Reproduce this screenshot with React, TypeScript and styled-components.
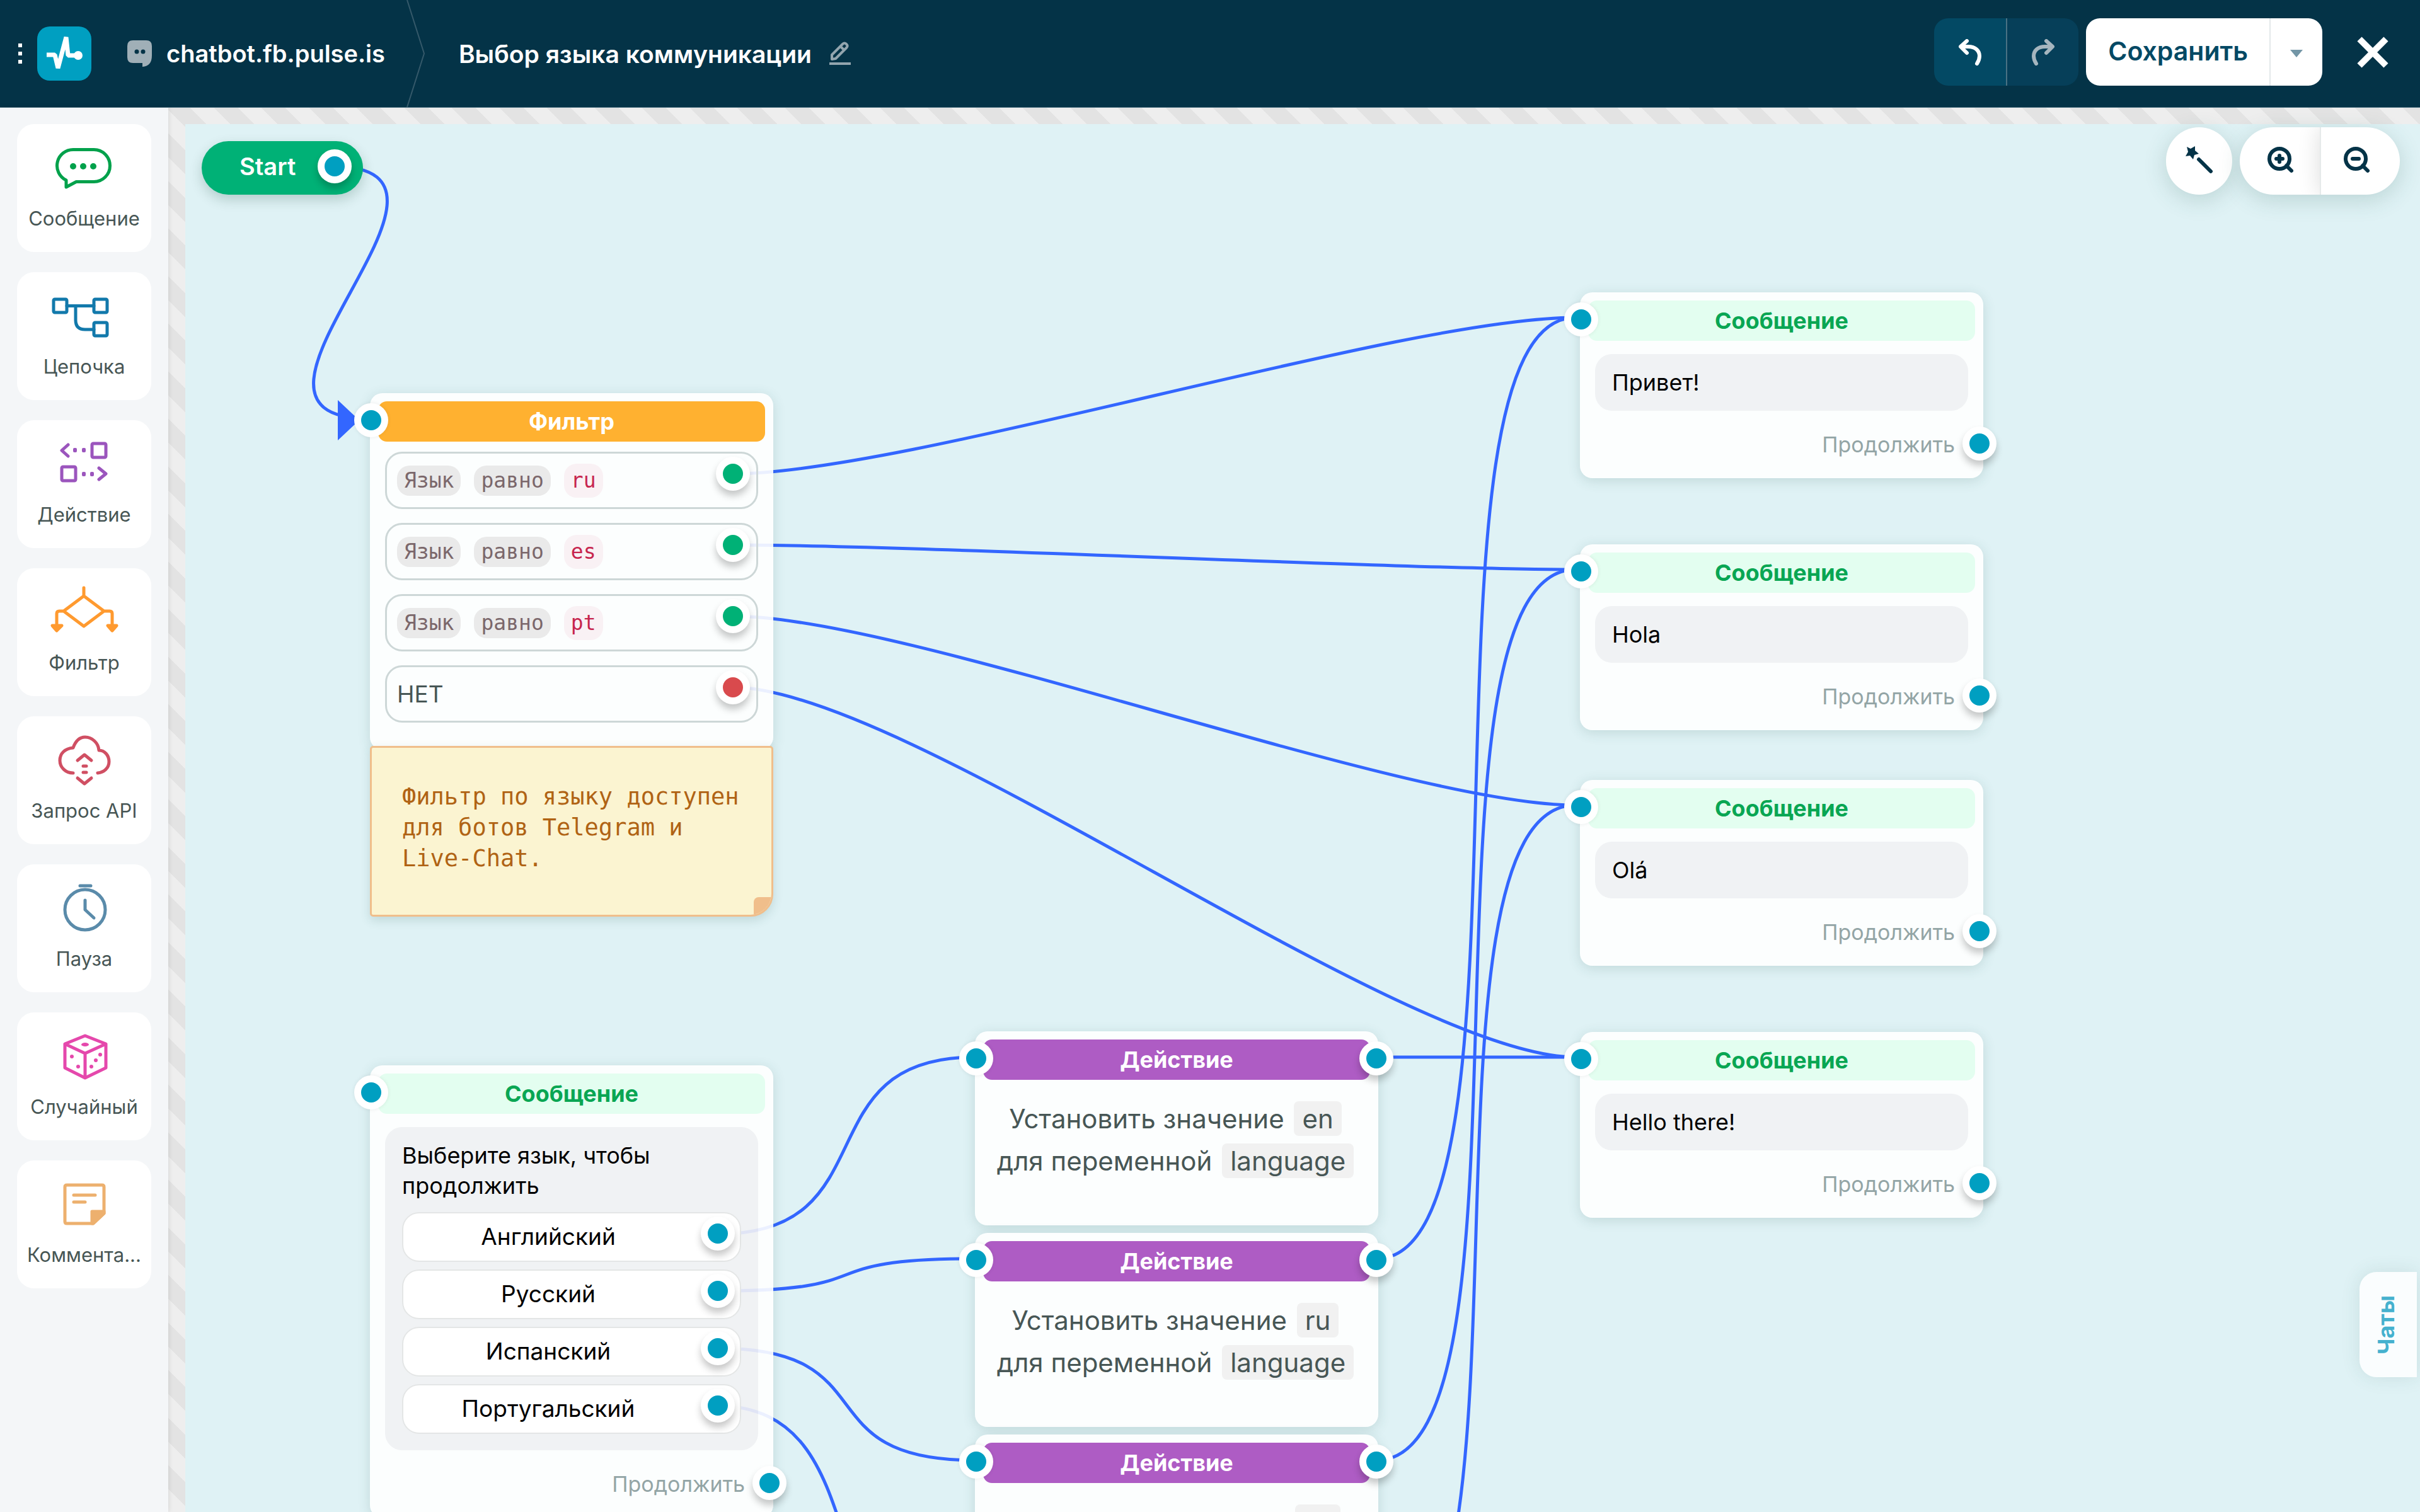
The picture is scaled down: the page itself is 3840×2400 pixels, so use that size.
import React from "react";
import styled, { createGlobalStyle, css } from "styled-components";

// Types
type Point = { x: number; y: number };

type PaletteItem = {
  title: string;
  color: string;
  icon: React.ReactNode;
};

type MessageData = Point & { text: string };
type ActionData = Point & { value: string };

// Theme values
const sans = `Inter, "Liberation Sans", sans-serif`;
const mono = `"DejaVu Sans Mono", "Liberation Mono", monospace`;

const colors = {
  navy: "#043347",
  teal: "#009fc1",
  green: "#00b176",
  red: "#d94a4d",
  edge: "#3366ff",
  text: "#475655",
};

// Data
const paletteItems: PaletteItem[] = [
  {
    title: "Сообщение",
    color: "#00a14b",
    icon: (
      <>
        <path d="M42 14.5H75a25.5 25.5 0 0 1 0 51H47L31 74V63A25.5 25.5 0 0 1 42 14.5z" />
        <g fill="currentColor" stroke="none">
          <circle cx="42" cy="41" r="5" />
          <circle cx="58" cy="41" r="5" />
          <circle cx="74" cy="41" r="5" />
        </g>
      </>
    ),
  },
  {
    title: "Цепочка",
    color: "#1279ab",
    icon: (
      <>
        <rect x="11" y="17" width="21" height="21" rx="2" />
        <rect x="75" y="17" width="21" height="21" rx="2" />
        <rect x="75" y="54" width="21" height="21" rx="2" />
        <path d="M32 27.5H75M46 27.5V50q0 15 15 15H75" />
      </>
    ),
  },
  {
    title: "Действие",
    color: "#9b55bd",
    icon: (
      <>
        <rect x="72" y="11" width="22" height="22" rx="2" />
        <rect x="24" y="48" width="22" height="22" rx="2" />
        <path d="M34 13 24 22 34 31M83 50 94 59 83 68" />
        <g fill="currentColor" stroke="none">
          <rect x="42" y="18" width="6" height="7" rx="2" />
          <rect x="56" y="18" width="6" height="7" rx="2" />
          <rect x="56" y="56" width="6" height="7" rx="2" />
          <rect x="69" y="56" width="6" height="7" rx="2" />
        </g>
      </>
    ),
  },
  {
    title: "Фильтр",
    color: "#ff9a2f",
    icon: (
      <>
        <path d="M59 5V17M59 18 27 42 59 66 91 42zM27 42H20q-4 0-4 4V64M91 42H100q4 0 4 4V64" />
        <path d="M9 65H24L16 73zM97 65H111L104 73z" fill="currentColor" />
      </>
    ),
  },
  {
    title: "Запрос API",
    color: "#d04f63",
    icon: (
      <>
        <path d="M42 64C30 64 21 55 21 44 21 33 29 25 42 24 46 13 53 7 61 7 72 7 82 16 83 28 92 28 99 36 99 46 99 56 91 63 81 64" />
        <path d="M49 44 60 35 71 44M58 53H63M58 63H63M49 72 60 81 71 72" />
      </>
    ),
  },
  {
    title: "Пауза",
    color: "#5a8baa",
    icon: (
      <>
        <circle cx="61" cy="46" r="32" />
        <path d="M53 8H70M61 31V46L75 59" />
      </>
    ),
  },
  {
    title: "Случайный",
    color: "#e548ac",
    icon: (
      <>
        <path d="M61 11 94 24V62L61 78 29 62V24zM29 24 61 39 94 24M61 39V78" />
        <g fill="currentColor" stroke="none">
          <ellipse cx="61" cy="25" rx="6" ry="3" />
          <circle cx="40" cy="44" r="3" />
          <circle cx="50" cy="60" r="3" />
          <circle cx="71" cy="60" r="3" />
          <circle cx="78" cy="50" r="3" />
          <circle cx="85" cy="41" r="3" />
        </g>
      </>
    ),
  },
  {
    title: "Коммента...",
    color: "#edb06e",
    icon: (
      <>
        <path d="M32 13H88q3 0 3 3V58L74 74H32q-3 0-3-3V16q0-3 3-3z" />
        <path d="M43 29H77M43 40H61" />
        <path d="M72 55H91V58L74 74H72z" fill="currentColor" />
      </>
    ),
  },
];

const conditions = ["ru", "es", "pt"];

const replies = ["Английский", "Русский", "Испанский", "Португальский"];

const messages: MessageData[] = [
  { x: 2213, y: 267, text: "Привет!" },
  { x: 2213, y: 667, text: "Hola" },
  { x: 2213, y: 1041, text: "Olá" },
  { x: 2213, y: 1441, text: "Hello there!" },
];

const actions: ActionData[] = [
  { x: 1253, y: 1440, value: "en" },
  { x: 1253, y: 1760, value: "ru" },
  { x: 1253, y: 2080, value: "es" },
];

const edges: [Point, Point][] = [
  [{ x: 234, y: 67 }, { x: 290, y: 467 }],
  [{ x: 869, y: 555 }, { x: 2206, y: 307 }],
  [{ x: 869, y: 668 }, { x: 2206, y: 707 }],
  [{ x: 869, y: 781 }, { x: 2206, y: 1081 }],
  [{ x: 869, y: 894 }, { x: 2206, y: 1481 }],
  [{ x: 844, y: 1762 }, { x: 1253, y: 1481 }],
  [{ x: 844, y: 1852 }, { x: 1253, y: 1801 }],
  [{ x: 844, y: 1943 }, { x: 1253, y: 2121 }],
  [{ x: 840, y: 2034 }, { x: 1249, y: 2441 }],
  [{ x: 1890, y: 1481 }, { x: 2206, y: 1481 }],
  [{ x: 1890, y: 1801 }, { x: 2206, y: 307 }],
  [{ x: 1890, y: 2121 }, { x: 2206, y: 707 }],
  [{ x: 1890, y: 2441 }, { x: 2206, y: 1081 }],
];

const CURVE = 275;

const edgePath = ([from, to]: [Point, Point]) =>
  `M${from.x} ${from.y}C${from.x + CURVE} ${from.y} ${to.x - CURVE} ${to.y} ${to.x} ${to.y}`;

// Styled Components
const GlobalStyle = createGlobalStyle`
  * {
    box-sizing: border-box;
  }

  body {
    margin: 0;
    font-family: ${sans};
    background: #f4f6f8;
    overflow: hidden;
  }

  button {
    font: inherit;
    color: inherit;
    margin: 0;
    padding: 0;
    border: none;
    background: none;
    cursor: pointer;
  }
`;

const Page = styled.div`
  display: flex;
  flex-direction: column;
  height: 100vh;
`;

const Header = styled.header`
  display: flex;
  align-items: stretch;
  flex: none;
  height: 171px;
  padding-right: 50px;
  color: white;
  background: ${colors.navy};
  border-bottom: 1px solid #4d7282;
`;

const Brand = styled.div`
  display: flex;
  align-items: center;
  padding-left: 29px;
`;

const DragDots = styled.svg`
  width: 6px;
  height: 32px;
  margin-right: 24px;
`;

const Logo = styled.a`
  display: flex;
  width: 86px;
  height: 86px;
  border-radius: 20px;
  background: ${colors.teal};
`;

const BotLink = styled.a`
  display: flex;
  align-items: center;
  gap: 22px;
  margin-left: 57px;
  color: white;
  font-size: 38px;
  font-weight: 600;
  text-decoration: none;
`;

const Separator = styled.svg`
  width: 30px;
  height: 170px;
  margin-left: 34px;
`;

const FlowTitle = styled.h1`
  display: flex;
  align-items: center;
  gap: 27px;
  margin: 0 auto 0 53px;
  font-size: 39px;
  font-weight: 600;
`;

const IconButton = styled.button`
  display: flex;
`;

const HeaderActions = styled.div`
  display: flex;
  align-items: flex-start;
  gap: 12px;
  padding-top: 29px;
`;

const ButtonGroup = styled.div`
  display: flex;
  height: 107px;
  border-radius: 22px;
  overflow: hidden;
`;

const HistoryButton = styled.button<{ $dim?: boolean }>`
  display: flex;
  align-items: center;
  justify-content: center;
  width: 114px;
  color: ${({ $dim }) => ($dim ? "#a5b5be" : "#ffffff")};
  background: ${({ $dim }) => ($dim ? "#063f59" : "#034964")};

  & + & {
    width: 115px;
    border-left: 2px solid #4a7183;
  }
`;

const SaveButton = styled.button`
  padding: 0 34px 4px 35px;
  color: #034964;
  background: white;
  font-size: 41px;
  font-weight: 600;
`;

const SaveMenuButton = styled.button`
  display: flex;
  align-items: center;
  justify-content: center;
  width: 84px;
  padding-top: 4px;
  background: white;
  border-left: 2px solid #e3e8ea;
`;

const CloseButton = styled.button`
  display: flex;
  align-items: center;
  height: 107px;
  margin-left: 43px;
`;

const Body = styled.div`
  display: flex;
  flex: 1;
  min-height: 0;
`;

const Palette = styled.aside`
  position: relative;
  z-index: 2;
  display: flex;
  flex-direction: column;
  flex: none;
  gap: 32px;
  width: 267px;
  padding: 26px 27px;
  background: #f4f6f8;
  box-shadow: 0 0 8px rgba(0, 0, 0, 0.12);
`;

const PaletteCard = styled.button<{ $color: string }>`
  display: flex;
  flex-direction: column;
  align-items: center;
  height: 203px;
  padding-top: 26px;
  border-radius: 27px;
  background: white;

  svg {
    width: 120px;
    height: 90px;
    color: ${({ $color }) => $color};
    fill: none;
    stroke: currentColor;
    stroke-width: 5;
    stroke-linecap: round;
    stroke-linejoin: round;
  }
`;

const PaletteTitle = styled.span`
  margin-top: 14px;
  color: ${colors.text};
  font-size: 31px;
  line-height: 40px;
  white-space: nowrap;
`;

const Canvas = styled.main`
  position: relative;
  flex: 1;
  min-width: 0;
  padding: 26px 0 0 27px;
  overflow: hidden;
  background: repeating-linear-gradient(
      45deg,
      #e3e3e3 0 12.5%,
      #eeeeee 12.5% 25%
    ) -3px 0 / 151px 151px;
`;

const Board = styled.div`
  position: relative;
  height: 100%;
  background: #dff2f5;
`;

const Edges = styled.svg`
  position: absolute;
  inset: 0;
  width: 100%;
  height: 100%;
  fill: none;
  stroke: ${colors.edge};
  stroke-width: 5;
`;

// Where a connector dot sits on its parent
const portPlaces = {
  input: css`
    position: absolute;
    top: 16px;
    left: -25px;
  `,
  output: css`
    position: absolute;
    top: 16px;
    right: -24px;
  `,
  footer: css`
    position: absolute;
    top: 25px;
    right: -34px;
  `,
  row: css`
    position: absolute;
    top: 5px;
    right: 10px;
  `,
  reply: css`
    position: absolute;
    top: 5px;
    right: 8px;
  `,
};

const Port = styled.span<{ $place?: keyof typeof portPlaces; $color?: string }>`
  width: 54px;
  height: 54px;
  border: 11px solid white;
  border-radius: 50%;
  background: ${({ $color = colors.teal }) => $color};
  box-shadow: ${({ $place }) =>
    $place === "input"
      ? "0 0 6px rgba(0, 0, 0, 0.08)"
      : "0 8px 12px rgba(0, 0, 0, 0.22)"};
  ${({ $place }) => $place && portPlaces[$place]}
`;

const StartNode = styled.div`
  position: absolute;
  top: 27px;
  left: 26px;
  display: flex;
  align-items: center;
  gap: 35px;
  height: 85px;
  padding: 0 18px 6px 60px;
  border-radius: 43px;
  color: white;
  background: ${colors.green};
  box-shadow: 0 8px 20px rgba(0, 60, 40, 0.2);
  font-size: 38px;
  font-weight: 600;
`;

const NodeBox = styled.section<{ $x: number; $y: number }>`
  position: absolute;
  top: ${({ $y }) => $y}px;
  left: ${({ $x }) => $x}px;
  width: 640px;
`;

const Card = styled.div`
  display: flow-root;
  padding: 13px;
  border-radius: 20px;
  background: rgba(255, 255, 255, 0.9);
  box-shadow: 0 4px 20px rgba(40, 90, 80, 0.16);
`;

const headTones = {
  filter: css`
    color: white;
    background: #ffb130;
  `,
  message: css`
    color: #09a653;
    background: #e3fef0;
  `,
  action: css`
    color: white;
    background: #ae5cc4;
  `,
};

const CardHead = styled.h2<{ $tone: keyof typeof headTones }>`
  margin: 0;
  border-radius: 14px;
  font-size: 36px;
  font-weight: 700;
  line-height: 64px;
  text-align: center;
  ${({ $tone }) => headTones[$tone]}
`;

const Conditions = styled.div`
  display: flex;
  flex-direction: column;
  gap: 22px;
  padding: 16px 11px 30px;
`;

const Condition = styled.div`
  position: relative;
  display: flex;
  align-items: center;
  gap: 21px;
  height: 91px;
  padding: 0 16px;
  border: 3px solid #cdd7d7;
  border-radius: 27px;
  color: ${colors.text};
  font-size: 37px;
`;

const Tag = styled.span<{ $value?: boolean }>`
  padding: 0 11px;
  border-radius: 20px;
  color: ${({ $value }) => ($value ? "#c7254e" : "#7b676b")};
  background: ${({ $value }) => ($value ? "#f9f1f4" : "#eaeaea")};
  font-family: ${mono};
  font-size: 33px;
  line-height: ${({ $value }) => ($value ? 54 : 48)}px;
`;

const Note = styled.div`
  position: relative;
  min-height: 271px;
  margin-top: -6px;
  padding: 53px 24px 53px 48px;
  border: 3px solid #f0be8b;
  border-radius: 5px 5px 36px 5px;
  overflow: hidden;
  color: #b06314;
  background: #fbf4d1;
  box-shadow: 0 6px 16px rgba(40, 90, 80, 0.16);
  font-family: ${mono};
  font-size: 37px;
  line-height: 49px;

  &::after {
    content: "";
    position: absolute;
    right: 0;
    bottom: 0;
    width: 28px;
    height: 28px;
    border-top-left-radius: 8px;
    background: #f0be8b;
  }
`;

const Bubble = styled.div`
  margin: 21px 11px 0;
  padding: 21px 27px;
  border-radius: 27px;
  background: rgba(15, 15, 50, 0.05);
  color: black;
  font-size: 36px;
  line-height: 48px;
`;

const Replies = styled.div`
  display: flex;
  flex-direction: column;
  gap: 12px;
  margin: 18px 0 5px;
`;

const Reply = styled.button`
  position: relative;
  height: 79px;
  padding: 0 74px 2px 0;
  border: 2px solid #e4e6e6;
  border-radius: 27px;
  background: white;
  font-size: 37px;
`;

const CardFoot = styled.div`
  position: relative;
  height: 94px;
  padding: 30px 32px 0 0;
  color: #93a5a6;
  font-size: 34px;
  line-height: 48px;
  text-align: right;
`;

const ActionText = styled.p`
  height: 218px;
  margin: 0;
  padding: 28px 4px 0 0;
  color: ${colors.text};
  font-size: 42px;
  line-height: 67px;
  text-align: center;
  white-space: nowrap;
`;

const Value = styled.span`
  margin-left: 4px;
  padding: 2px 13px;
  border-radius: 8px;
  background: #f1f1f1;
`;

const Tools = styled.div`
  position: absolute;
  top: 5px;
  right: 32px;
  display: flex;
  gap: 12px;
`;

const ToolGroup = styled.div`
  display: flex;
  height: 107px;
  border-radius: 54px;
  overflow: hidden;
  background: white;
  box-shadow: 0 8px 36px rgba(40, 90, 80, 0.2);
`;

const ToolButton = styled.button<{ $wide?: boolean }>`
  display: flex;
  align-items: center;
  justify-content: center;
  width: ${({ $wide }) => ($wide ? 127 : 105)}px;
  padding-bottom: 6px;
  color: ${colors.navy};

  & + & {
    padding-right: 14px;
    border-left: 2px solid #e6eaea;
    box-shadow: 0 0 36px rgba(0, 0, 0, 0.14);
  }
`;

const ChatsTab = styled.button`
  position: absolute;
  right: 5px;
  bottom: 214px;
  width: 91px;
  height: 167px;
  padding-left: 8px;
  border-radius: 0 27px 27px 0;
  color: #45b1ce;
  background: rgba(255, 255, 255, 0.84);
  box-shadow: 0 0 30px rgba(40, 90, 80, 0.12);
  font-size: 36px;
  font-weight: 700;
  writing-mode: vertical-rl;
  transform: rotate(180deg);
`;

// Icons
const UndoIcon = () => (
  <svg width="36" height="42" viewBox="0 0 36 42" fill="none" stroke="currentColor" strokeWidth="6" strokeLinecap="round" strokeLinejoin="round">
    <path d="M13 3 3 12 13 22M4 12H15C27 12 33 19 33 27 33 32 31 36 29 39" />
  </svg>
);

const RedoIcon = () => (
  <svg width="36" height="42" viewBox="0 0 36 42" fill="none" stroke="currentColor" strokeWidth="6" strokeLinecap="round" strokeLinejoin="round">
    <path d="M23 3 33 12 23 22M32 12H21C9 12 3 19 3 27 3 32 5 36 7 39" />
  </svg>
);

const WandIcon = () => (
  <svg width="46" height="46" viewBox="0 0 46 46" fill="currentColor">
    <path d="M3 3 9 6 16 2 16 9 22 14 15 16 13 23 8 17 1 18 5 11z" />
    <path d="M22 23 41 42" stroke="currentColor" strokeWidth="6" strokeLinecap="round" />
  </svg>
);

const ZoomIcon = ({ plus }: { plus?: boolean }) => (
  <svg width="42" height="42" viewBox="0 0 42 42" fill="none" stroke="currentColor" strokeWidth="6" strokeLinecap="round">
    <circle cx="20" cy="20" r="16" />
    <path d={plus ? "M31 31 39 39M15 20H25M20 15V25" : "M31 31 39 39M15 20H25"} />
  </svg>
);

// Parts
const MessageNode = ({ x, y, children }: Point & { children: React.ReactNode }) => (
  <NodeBox $x={x} $y={y}>
    <Card>
      <CardHead $tone="message">Сообщение</CardHead>
      <Bubble>{children}</Bubble>
      <CardFoot>
        Продолжить
        <Port $place="footer" />
      </CardFoot>
    </Card>
    <Port $place="input" />
  </NodeBox>
);

const ActionNode = ({ x, y, value }: ActionData) => (
  <NodeBox $x={x} $y={y}>
    <Card>
      <CardHead $tone="action">Действие</CardHead>
      <ActionText>
        Установить значение <Value>{value}</Value>
        <br />
        для переменной <Value>language</Value>
      </ActionText>
    </Card>
    <Port $place="input" />
    <Port $place="output" />
  </NodeBox>
);

const TopBar = () => (
  <Header>
    <Brand>
      <DragDots viewBox="0 0 6 32" fill="white">
        <rect width="6" height="6" />
        <rect y="13" width="6" height="6" />
        <rect y="26" width="6" height="6" />
      </DragDots>
      <Logo href="#" aria-label="SendPulse">
        <svg width="86" height="86" viewBox="0 0 86 86" fill="none" stroke="white" strokeWidth="7" strokeLinejoin="bevel">
          <path d="M15 45H28L33 66 46 17 49 46H65" />
          <circle cx="65" cy="46" r="7" fill="white" stroke="none" />
        </svg>
      </Logo>
      <BotLink href="#">
        <svg width="40" height="42" viewBox="0 0 40 42">
          <path d="M9 0H30q9 0 9 9V24q0 17-15 18V36H9q-9 0-9-9V9q0-9 9-9z" fill="#a0afb7" />
          <circle cx="15" cy="18" r="3.5" fill={colors.navy} />
          <circle cx="25" cy="18" r="3.5" fill={colors.navy} />
        </svg>
        chatbot.fb.pulse.is
      </BotLink>
      <Separator viewBox="0 0 30 170" fill="none" stroke="#35596a" strokeWidth="2">
        <path d="M1 0 28 85 1 170" />
      </Separator>
    </Brand>
    <FlowTitle>
      Выбор языка коммуникации
      <IconButton aria-label="Переименовать">
        <svg width="36" height="38" viewBox="0 0 36 38" fill="none" stroke="#93a5ae" strokeWidth="4" strokeLinejoin="round">
          <path d="M5 28V21L22 4Q25 1 28 4 31 7 28 10L11 27zM19 8 25 14" />
          <path d="M1 35H35" />
        </svg>
      </IconButton>
    </FlowTitle>
    <HeaderActions>
      <ButtonGroup>
        <HistoryButton aria-label="Отменить">
          <UndoIcon />
        </HistoryButton>
        <HistoryButton $dim aria-label="Повторить">
          <RedoIcon />
        </HistoryButton>
      </ButtonGroup>
      <ButtonGroup>
        <SaveButton>Сохранить</SaveButton>
        <SaveMenuButton aria-label="Другие варианты сохранения">
          <svg width="20" height="12" viewBox="0 0 20 12" fill="#7396a6">
            <path d="M0 0H20L10 12z" />
          </svg>
        </SaveMenuButton>
      </ButtonGroup>
      <CloseButton aria-label="Закрыть">
        <svg width="50" height="50" viewBox="0 0 50 50" stroke="white" strokeWidth="10">
          <path d="M4 4 46 46M46 4 4 46" />
        </svg>
      </CloseButton>
    </HeaderActions>
  </Header>
);

const App: React.FC = () => {
  return (
    <Page>
      <GlobalStyle />
      <TopBar />
      <Body>
        <Palette>
          {paletteItems.map((item) => (
            <PaletteCard key={item.title} $color={item.color}>
              <svg viewBox="0 0 120 90">{item.icon}</svg>
              <PaletteTitle>{item.title}</PaletteTitle>
            </PaletteCard>
          ))}
        </Palette>

        <Canvas>
          <Board>
            <Edges>
              {edges.map((edge, index) => (
                <path key={index} d={edgePath(edge)} />
              ))}
              <path d="M242 438 276 470 242 502z" fill={colors.edge} stroke="none" />
            </Edges>

            <StartNode>
              Start
              <Port />
            </StartNode>

            <NodeBox $x={293} $y={427}>
              <Card>
                <CardHead $tone="filter">Фильтр</CardHead>
                <Conditions>
                  {conditions.map((lang) => (
                    <Condition key={lang}>
                      <Tag>Язык</Tag>
                      <Tag>равно</Tag>
                      <Tag $value>{lang}</Tag>
                      <Port $place="row" $color={colors.green} />
                    </Condition>
                  ))}
                  <Condition>
                    НЕТ
                    <Port $place="row" $color={colors.red} />
                  </Condition>
                </Conditions>
              </Card>
              <Note>Фильтр по языку доступен для ботов Telegram и Live-Chat.</Note>
              <Port $place="input" />
            </NodeBox>

            {messages.map((message) => (
              <MessageNode key={message.text} x={message.x} y={message.y}>
                {message.text}
              </MessageNode>
            ))}

            <MessageNode x={293} y={1494}>
              Выберите язык, чтобы продолжить
              <Replies>
                {replies.map((reply) => (
                  <Reply key={reply}>
                    {reply}
                    <Port $place="reply" />
                  </Reply>
                ))}
              </Replies>
            </MessageNode>

            {actions.map((action) => (
              <ActionNode key={action.value} {...action} />
            ))}

            <Tools>
              <ToolGroup>
                <ToolButton aria-label="Выровнять">
                  <WandIcon />
                </ToolButton>
              </ToolGroup>
              <ToolGroup>
                <ToolButton $wide aria-label="Увеличить">
                  <ZoomIcon plus />
                </ToolButton>
                <ToolButton $wide aria-label="Уменьшить">
                  <ZoomIcon />
                </ToolButton>
              </ToolGroup>
            </Tools>

            <ChatsTab>Чаты</ChatsTab>
          </Board>
        </Canvas>
      </Body>
    </Page>
  );
};

export default App;
